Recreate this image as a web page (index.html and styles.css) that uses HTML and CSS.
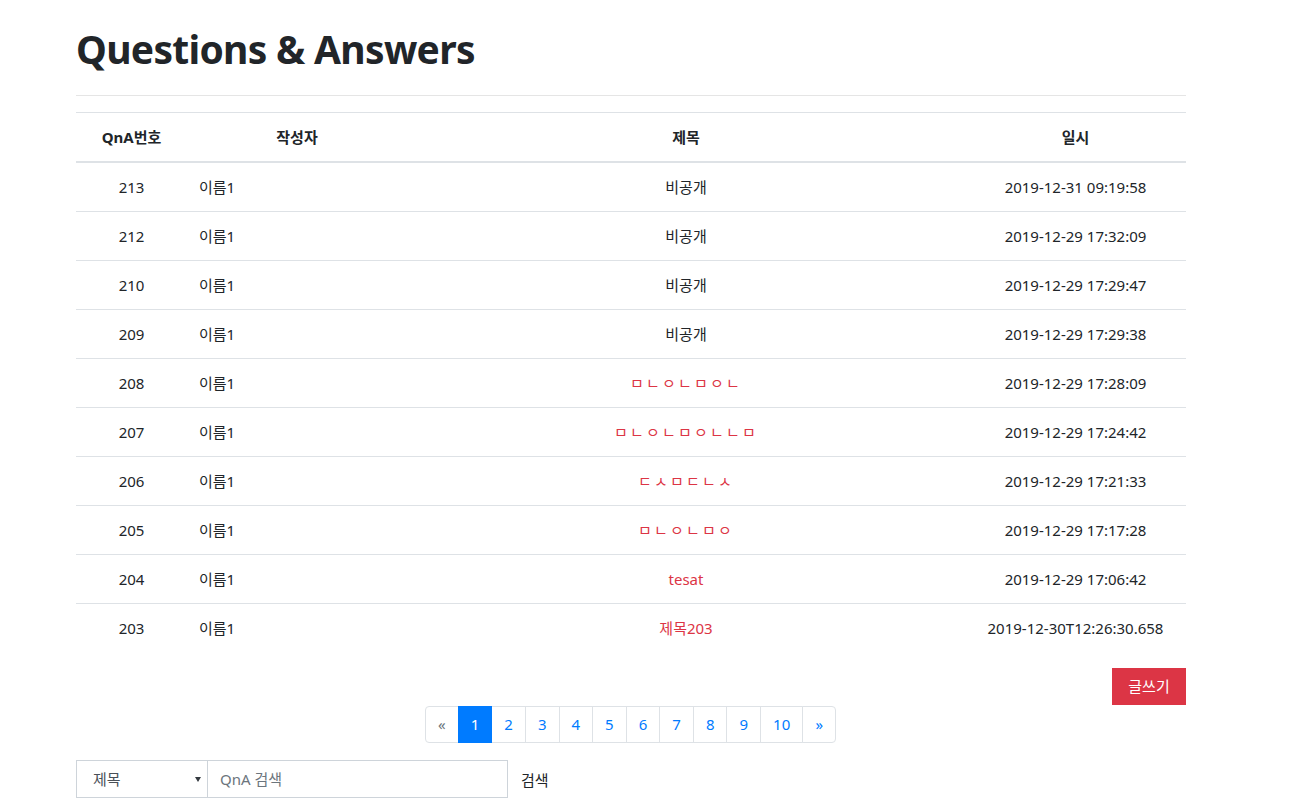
FILE: index.html
```html
<!DOCTYPE html>
<html lang="ko">
<head>
<meta charset="utf-8">
<title>Questions &amp; Answers</title>
<link rel="stylesheet" href="styles.css">
</head>
<body>
<div class="container">
  <h1 class="title">Questions &amp; Answers</h1>
  <hr class="rule">
  <table class="qna">
    <colgroup>
      <col class="c-no"><col class="c-author"><col class="c-title"><col class="c-date">
    </colgroup>
    <thead>
      <tr><th>QnA번호</th><th>작성자</th><th>제목</th><th>일시</th></tr>
    </thead>
    <tbody>
      <tr><td class="center">213</td><td>이름1</td><td class="center">비공개</td><td class="center">2019-12-31 09:19:58</td></tr>
      <tr><td class="center">212</td><td>이름1</td><td class="center">비공개</td><td class="center">2019-12-29 17:32:09</td></tr>
      <tr><td class="center">210</td><td>이름1</td><td class="center">비공개</td><td class="center">2019-12-29 17:29:47</td></tr>
      <tr><td class="center">209</td><td>이름1</td><td class="center">비공개</td><td class="center">2019-12-29 17:29:38</td></tr>
      <tr><td class="center">208</td><td>이름1</td><td class="center"><a class="link jamo" href="#">ㅁㄴㅇㄴㅁㅇㄴ</a></td><td class="center">2019-12-29 17:28:09</td></tr>
      <tr><td class="center">207</td><td>이름1</td><td class="center"><a class="link jamo" href="#">ㅁㄴㅇㄴㅁㅇㄴㄴㅁ</a></td><td class="center">2019-12-29 17:24:42</td></tr>
      <tr><td class="center">206</td><td>이름1</td><td class="center"><a class="link jamo" href="#">ㄷㅅㅁㄷㄴㅅ</a></td><td class="center">2019-12-29 17:21:33</td></tr>
      <tr><td class="center">205</td><td>이름1</td><td class="center"><a class="link jamo" href="#">ㅁㄴㅇㄴㅁㅇ</a></td><td class="center">2019-12-29 17:17:28</td></tr>
      <tr><td class="center">204</td><td>이름1</td><td class="center"><a class="link" href="#">tesat</a></td><td class="center">2019-12-29 17:06:42</td></tr>
      <tr><td class="center">203</td><td>이름1</td><td class="center"><a class="link" href="#">제목203</a></td><td class="center">2019-12-30T12:26:30.658</td></tr>
    </tbody>
  </table>
  <div class="actions">
    <a class="btn-write" href="#">글쓰기</a>
  </div>
  <nav class="pager-wrap">
    <ul class="pager">
      <li class="page"><a class="page-link muted" href="#">&laquo;</a></li>
      <li class="page"><a class="page-link active" href="#">1</a></li>
      <li class="page"><a class="page-link" href="#">2</a></li>
      <li class="page"><a class="page-link" href="#">3</a></li>
      <li class="page"><a class="page-link" href="#">4</a></li>
      <li class="page"><a class="page-link" href="#">5</a></li>
      <li class="page"><a class="page-link" href="#">6</a></li>
      <li class="page"><a class="page-link" href="#">7</a></li>
      <li class="page"><a class="page-link" href="#">8</a></li>
      <li class="page"><a class="page-link" href="#">9</a></li>
      <li class="page"><a class="page-link" href="#">10</a></li>
      <li class="page"><a class="page-link" href="#">&raquo;</a></li>
    </ul>
  </nav>
  <form class="search">
    <div class="select">
      <span>제목</span>
      <span class="caret"></span>
    </div>
    <input class="search-input" type="text" placeholder="QnA 검색">
    <button class="search-btn" type="button">검색</button>
  </form>
</div>
</body>
</html>
```

FILE: styles.css
```css
* { box-sizing: border-box; }
html, body { margin: 0; padding: 0; background: #fff; }
body {
  font-family: "Noto Sans", "Noto Sans CJK KR", sans-serif;
  font-size: 15px;
  color: #212529;
  line-height: 1.5;
}
.container {
  width: 1110px;
  margin-left: 76px;
  padding-top: 26px;
}
.title {
  margin: 0 0 22px;
  font-size: 39px;
  font-weight: 700;
  line-height: 1.2;
  letter-spacing: -0.7px;
}
.rule {
  margin: 0 0 16px;
  border: 0;
  border-top: 1px solid #e5e5e5;
}
.qna {
  width: 100%;
  border-collapse: collapse;
  table-layout: fixed;
}
.c-no { width: 111px; }
.c-author { width: 220px; }
.c-title { width: 558px; }
.c-date { width: 221px; }
.qna th, .qna td {
  padding: 12px;
  height: 49px;
  border-top: 1px solid #dee2e6;
  vertical-align: middle;
  font-size: 15px;
}
.qna th {
  font-weight: 700;
  text-align: center;
  border-bottom: 2px solid #dee2e6;
  height: 50px;
}
.qna td { text-align: left; }
.qna td.center { text-align: center; }
.link { color: #dc3545; text-decoration: none; }
.jamo { font-size: 15px; letter-spacing: 2.2px; }
.actions {
  display: flex;
  justify-content: flex-end;
  margin-top: 16px;
}
.btn-write {
  display: inline-block;
  width: 74px;
  height: 37px;
  line-height: 37px;
  text-align: center;
  background: #dc3545;
  color: #fff;
  text-decoration: none;
  font-size: 15px;
}
.pager-wrap { display: flex; justify-content: center; margin-top: 1px; }
.pager {
  display: flex;
  list-style: none;
  margin: 0 0 17px;
  padding: 0;
  margin-left: -1px;
}
.page-link {
  display: block;
  padding: 8px 12px;
  margin-left: -1px;
  line-height: 19px;
  height: 37px;
  min-width: 34px;
  text-align: center;
  color: #007bff;
  text-decoration: none;
  border: 1px solid #dee2e6;
  background: #fff;
  font-size: 15px;
}
.page:first-child .page-link { margin-left: 0; border-radius: 4px 0 0 4px; }
.page:last-child .page-link { border-radius: 0 4px 4px 0; }
.page-link.muted { color: #6c757d; }
.page-link.active { background: #007bff; border-color: #007bff; color: #fff; position: relative; z-index: 1; }
.search {
  display: flex;
  align-items: center;
  margin: 0;
}
.select {
  width: 132px;
  height: 38px;
  border: 1px solid #ced4da;
  display: flex;
  align-items: center;
  justify-content: space-between;
  padding: 0 6px 0 16px;
  font-size: 15px;
  color: #495057;
}
.caret {
  width: 0; height: 0;
  border-left: 3px solid transparent;
  border-right: 3px solid transparent;
  border-top: 5px solid #343a40;
}
.search-input {
  width: 300px;
  height: 38px;
  border: 1px solid #ced4da;
  border-left: 0;
  padding: 0 12px;
  font-family: inherit;
  font-size: 15px;
  color: #495057;
  outline: none;
}
.search-input::placeholder { color: #6c757d; }
.search-btn {
  background: none;
  border: 0;
  font-family: inherit;
  font-size: 15px;
  color: #212529;
  padding: 0 12px;
  margin-left: 1px;
  height: 38px;
}
```
